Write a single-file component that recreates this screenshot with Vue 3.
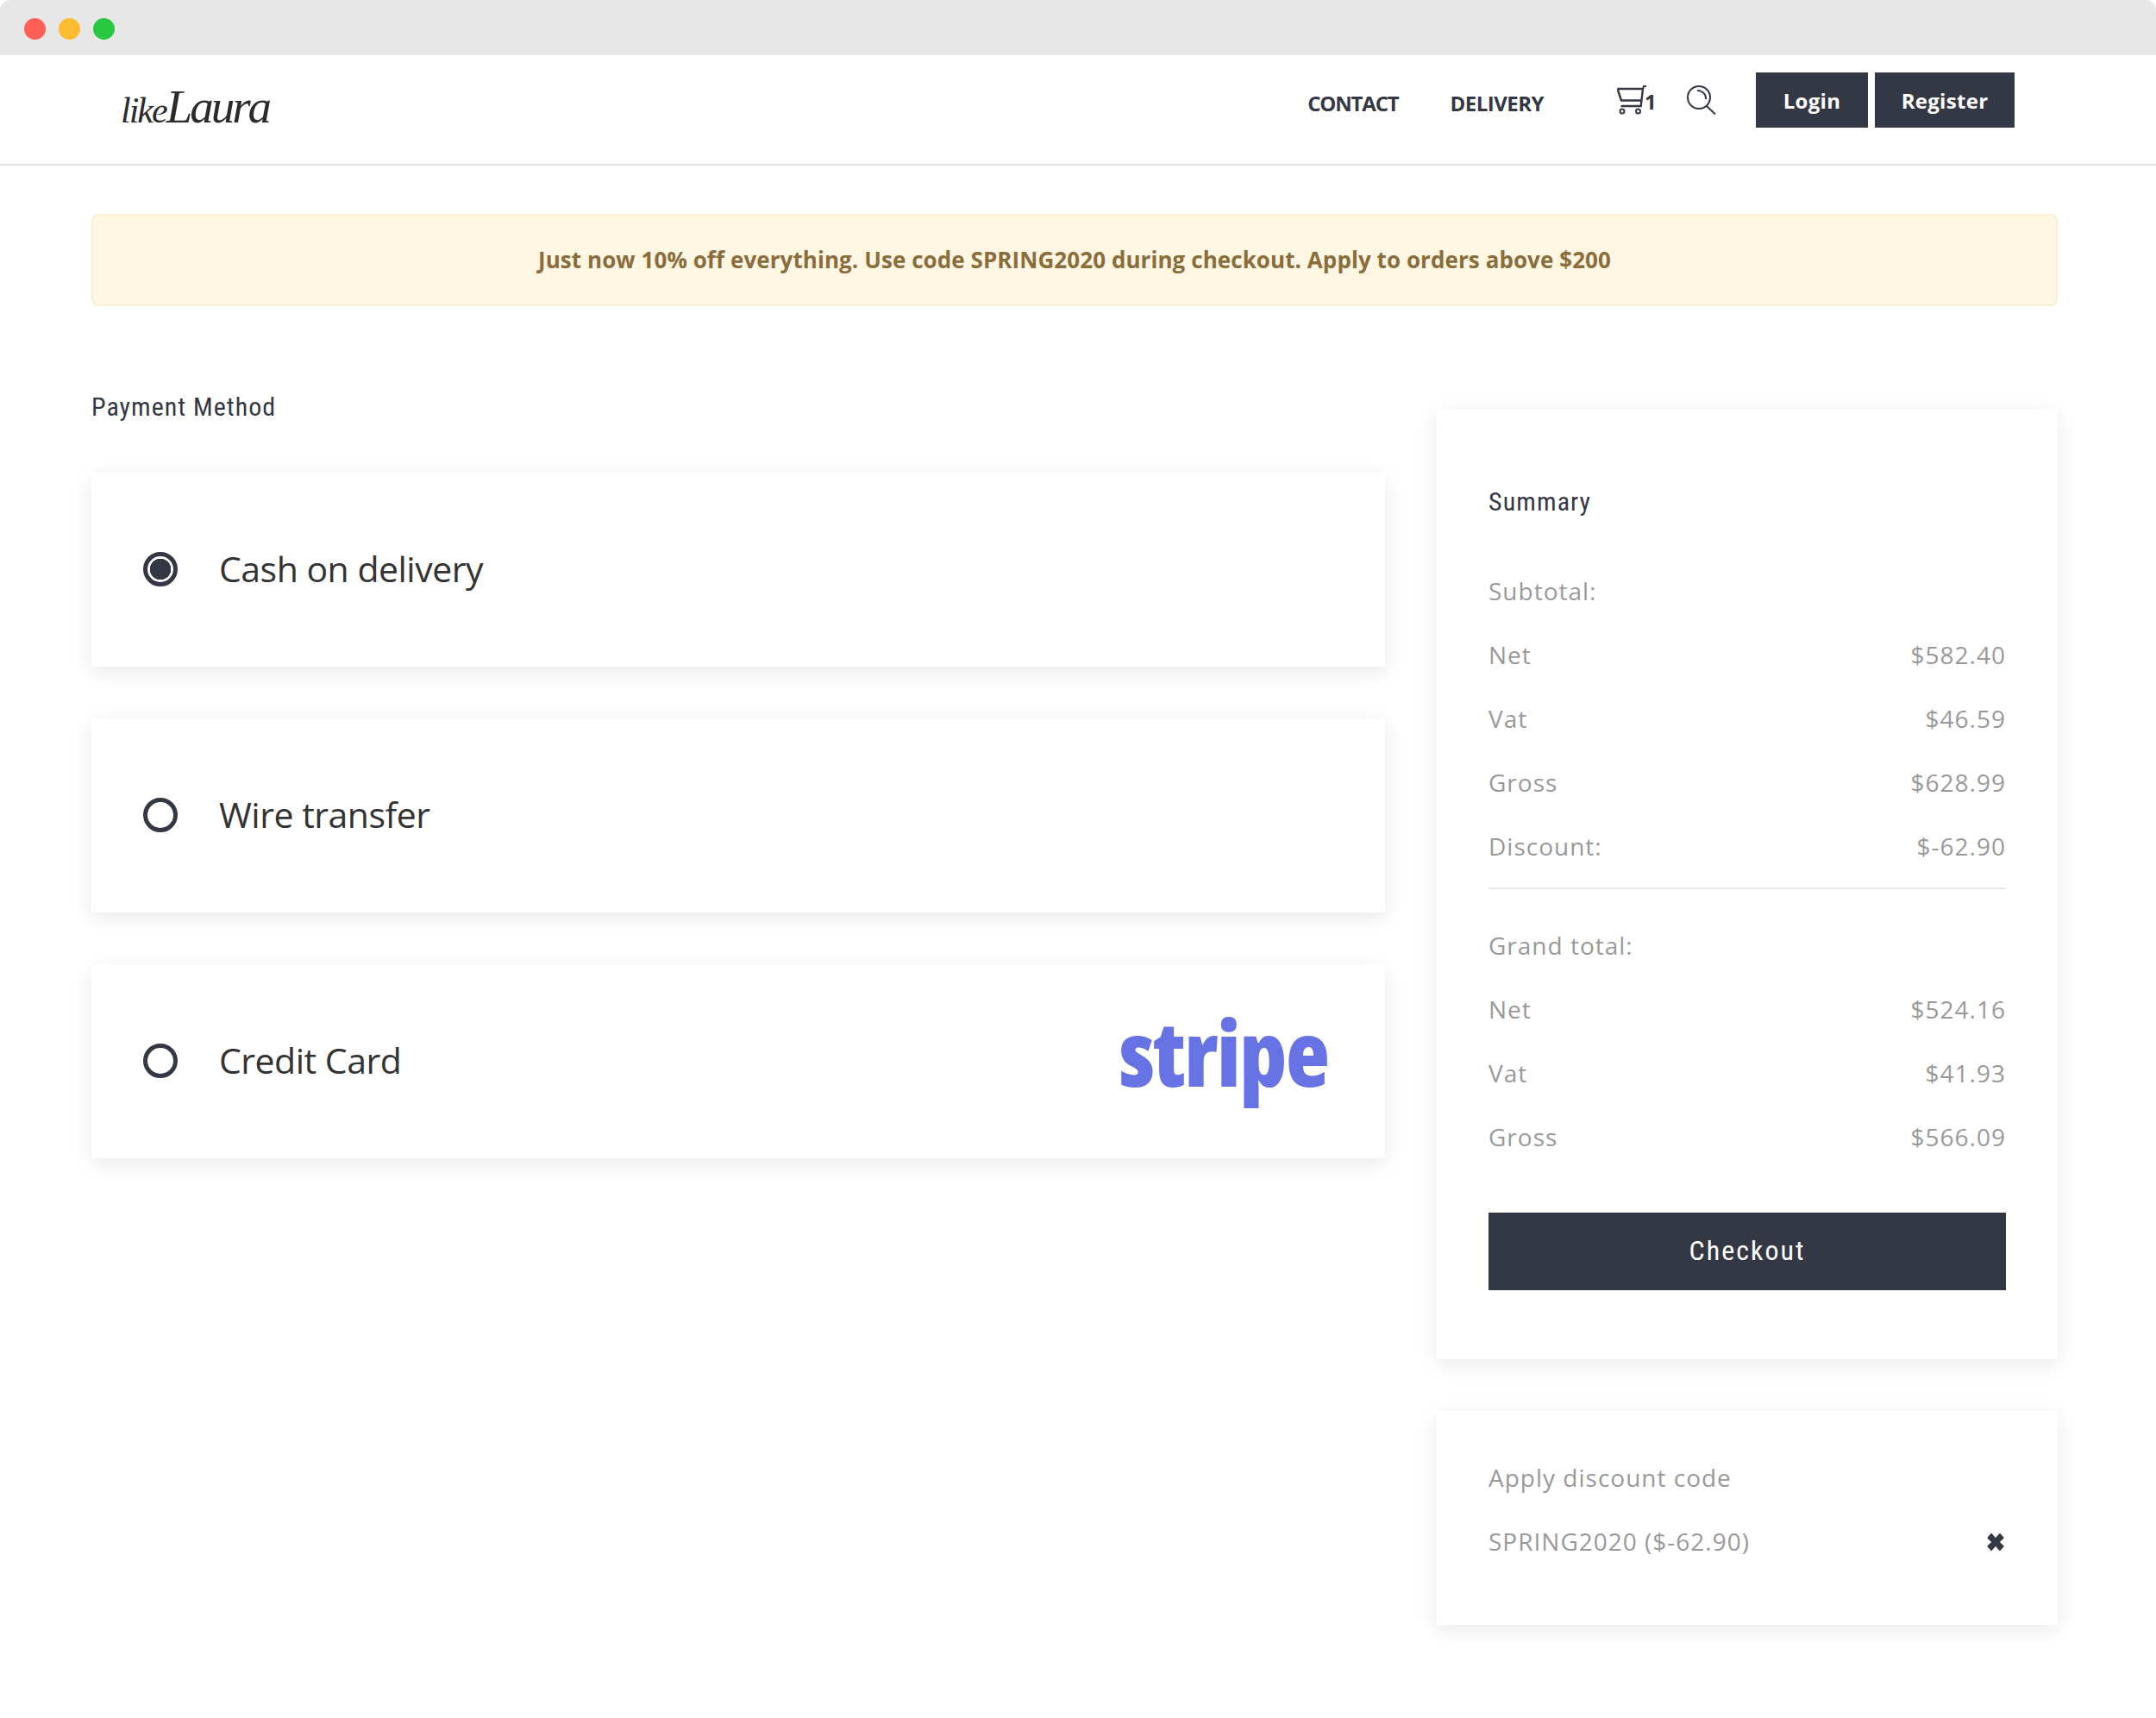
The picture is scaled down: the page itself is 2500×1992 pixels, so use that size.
<script setup>
const subtotal = [['Net', '$582.40'], ['Vat', '$46.59'], ['Gross', '$628.99'], ['Discount:', '$-62.90']]
const grand = [['Net', '$524.16'], ['Vat', '$41.93'], ['Gross', '$566.09']]
const methods = [
  { name: 'Cash on delivery', on: true },
  { name: 'Wire transfer', on: false },
  { name: 'Credit Card', on: false, stripe: true }
]
</script>

<template>
  <div class="window">
    <div class="titlebar">
      <i class="dot red"></i><i class="dot amber"></i><i class="dot green"></i>
    </div>
    <header class="header">
      <div class="logo"><span class="like">like</span><span class="laura">Laura</span></div>
      <nav class="nav">
        <a class="link contact">CONTACT</a>
        <a class="link delivery">DELIVERY</a>
        <span class="cart">
          <svg width="34" height="34" viewBox="0 0 34 34" fill="none" stroke="#343845" stroke-width="2">
            <path d="M0.500 4H30L27.700 24H4.500" stroke-width="2.400" />
            <path d="M0.500 4L5 17.500H29" stroke-width="2.400" />
            <path d="M30 4L31 1H34" />
            <circle cx="6" cy="30" r="2.500" />
            <circle cx="24.500" cy="30" r="2.500" />
          </svg>
          <b>1</b>
        </span>
        <svg class="search" width="36" height="36" viewBox="0 0 36 36" fill="none" stroke="#343845" stroke-width="2">
          <circle cx="16" cy="14" r="13" />
          <path d="M14 6C19 5.500 24.500 10 24 16" />
          <path d="M25 24L35 33.500" />
        </svg>
        <button class="hbtn login">Login</button>
        <button class="hbtn register">Register</button>
      </nav>
    </header>

    <div class="alert">Just now 10% off everything. Use code SPRING2020 during checkout. Apply to orders above $200</div>

    <main class="main">
      <section class="left">
        <h2 class="heading">Payment Method</h2>
        <div class="method" v-for="m in methods" :key="m.name">
          <span class="radio" :class="{ on: m.on }"></span>
          <span class="mlabel">{{ m.name }}</span>
          <span v-if="m.stripe" class="stripe">stripe</span>
        </div>
      </section>

      <aside class="right">
        <div class="panel summary">
          <div class="row title">Summary</div>
          <div class="row">Subtotal:</div>
          <div class="row" v-for="r in subtotal" :key="r[0]"><span>{{ r[0] }}</span><span>{{ r[1] }}</span></div>
          <hr class="rule" />
          <div class="row">Grand total:</div>
          <div class="row" v-for="r in grand" :key="r[0] + 'g'"><span>{{ r[0] }}</span><span>{{ r[1] }}</span></div>
          <button class="checkout">Checkout</button>
        </div>
        <div class="panel discount">
          <div class="row">Apply discount code</div>
          <div class="row">
            <span>SPRING2020 ($-62.90)</span>
            <svg class="remove" width="24" height="24" viewBox="0 0 22 22"><path d="M3 6.500L6.500 2.500L11 7.500L15.500 2.500L19 6.500L14.500 11L19 15.500L15.500 19.500L11 14.500L6.500 19.500L3 15.500L7.500 11Z" fill="#343845" stroke="#343845" stroke-width="1.500" stroke-linejoin="round" /></svg>
          </div>
        </div>
      </aside>
    </main>
  </div>
</template>

<style scoped>
.window { width: 2500px; height: 1992px; background: #fff; overflow: hidden; color: #343845; font-family: "Open Sans", "Noto Sans", sans-serif; font-stretch: 90%; }
.titlebar { height: 64px; background: #e7e7e7; display: flex; align-items: center; gap: 15px; padding: 2px 0 0 28px; box-sizing: border-box; border-radius: 12px 12px 0 0; }
.dot { width: 25px; height: 25px; border-radius: 50%; display: block; }
.red { background: #ff5f57; }
.amber { background: #febc2e; }
.green { background: #28c840; }
.header { height: 128px; box-sizing: border-box; border-bottom: 2px solid #dedede; display: flex; justify-content: space-between; padding: 20px 164px 0 140px; }
.logo { font-family: "Liberation Serif", serif; font-style: italic; color: #2b2b2b; height: 60px; display: flex; align-items: baseline; padding-top: 8px; }
.like { font-size: 42px; letter-spacing: -2px; }
.laura { font-size: 55px; letter-spacing: -3px; }
.nav { display: flex; align-items: flex-start; }
.link { font-size: 24px; font-weight: 700; line-height: 34px; margin-top: 19px; }
.contact { margin-right: 60px; letter-spacing: -1.200px; }
.delivery { margin-right: 85px; letter-spacing: -.500px; }
.cart { display: flex; align-items: flex-end; width: 46px; margin: 15px 33px 0 0; height: 34px; }
.cart svg { flex: none; }
.cart b { font-size: 24px; line-height: 30px; margin-left: -2px; }
.search { margin: 15px 46px 0 0; }
.hbtn { height: 64px; border: 0; background: #343845; color: #fff; font: inherit; font-stretch: 90%; font-size: 24px; font-weight: 700; letter-spacing: .3px; padding: 0; }
.login { width: 130px; margin-right: 8px; }
.register { width: 162px; }
.alert { margin: 56px 114px 0 106px; height: 107px; box-sizing: border-box; border: 2px solid #faefd2; border-radius: 8px; background: #fdf6e3; color: #8a6d3b; font-size: 26px; font-weight: 700; letter-spacing: .07px; display: flex; align-items: center; justify-content: center; padding-bottom: 2px; }
.main { display: grid; grid-template-columns: 1500px 720px; gap: 60px; padding: 100px 114px 0 106px; }
.heading { margin: 0 0 59px; font-family: Roboto, sans-serif; font-stretch: 75%; font-weight: 400; font-size: 30px; line-height: 34px; letter-spacing: 1px; }
.method { height: 225px; margin-bottom: 60px; background: #fff; box-shadow: 0 6px 24px rgba(0, 0, 0, .09); display: flex; align-items: center; padding: 0 66px 0 60px; color: #333; }
.radio { width: 40px; height: 40px; box-sizing: border-box; border: 5px solid #343845; border-radius: 50%; margin-right: 48px; margin-bottom: 2px; display: block; flex: none; }
.radio.on { background: radial-gradient(circle, #343845 0 12px, #fff 12.500px); }
.mlabel { font-size: 41px; letter-spacing: -.5px; padding-bottom: 4px; }
.stripe { margin-left: auto; margin-bottom: 22px; color: #6772e5; font-size: 105px; font-stretch: 75%; font-weight: 800; letter-spacing: -1.500px; line-height: 1; }
.right { padding-top: 20px; }
.panel { background: #fff; box-shadow: 0 6px 24px rgba(0, 0, 0, .09); padding: 0 60px; color: #999; font-size: 28px; letter-spacing: 1px; }
.summary { height: 1101px; box-sizing: border-box; padding-top: 70px; margin-bottom: 60px; }
.discount { height: 248px; box-sizing: border-box; padding-top: 41px; }
.row { height: 74px; display: flex; align-items: center; justify-content: space-between; padding-bottom: 2px; box-sizing: border-box; }
.title { color: #343845; font-family: Roboto, sans-serif; font-stretch: 75%; font-size: 30px; letter-spacing: 1.100px; margin-bottom: 30px; }
.rule { border: 0; height: 2px; background: #e8e8e8; margin: 10px 0 29px; }
.checkout { display: block; width: 100%; height: 90px; margin-top: 50px; padding-bottom: 4px; border: 0; background: #343845; color: #fff; font-family: Roboto, sans-serif; font-stretch: 75%; font-size: 32px; letter-spacing: 2px; }
.remove { margin-top: 2px; }
</style>

<style>
html, body { margin: 0; background: #fff; }
</style>
